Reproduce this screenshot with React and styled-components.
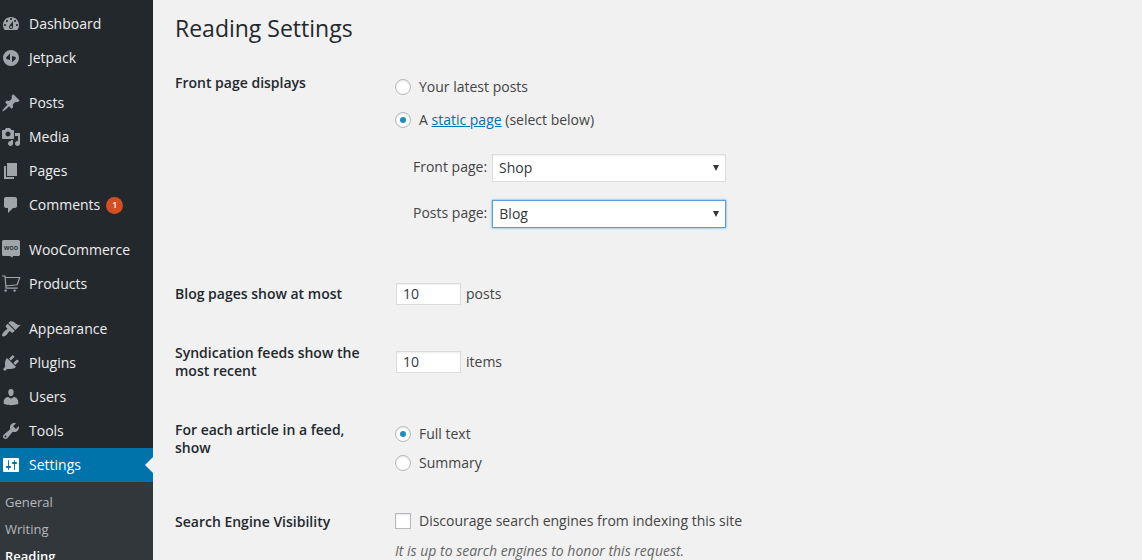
import React from 'react';
import styled, { createGlobalStyle, css, ThemeProvider } from 'styled-components';

const theme = {
  font: "'Open Sans', 'Noto Sans', sans-serif",
  colors: {
    menu: '#23282d',
    submenu: '#32373c',
    active: '#0073aa',
    menuText: '#eee',
    submenuText: '#b4b9be',
    icon: '#a0a5aa',
    badge: '#d54e21',
    page: '#f1f1f1',
    heading: '#23282d',
    text: '#444',
    muted: '#666',
    field: '#32373c',
    border: '#ddd',
    controlBorder: '#b4b9be',
    focus: '#5b9dd9',
    check: '#1e8cbe'
  }
};

const GlobalStyle = createGlobalStyle`
  *, *::before, *::after {
    box-sizing: border-box;
  }
  body {
    margin: 0;
    background: ${p => p.theme.colors.page};
    color: ${p => p.theme.colors.text};
    font-family: ${p => p.theme.font};
    font-size: 14px;
    line-height: 18px;
  }
`;

const icons = {
  dashboard: <path d="M3.76 16h12.48c1.1-1.37 1.76-3.11 1.76-5 0-4.42-3.58-8-8-8s-8 3.58-8 8c0 1.89.66 3.63 1.76 5zM10 4c.55 0 1 .45 1 1s-.45 1-1 1-1-.45-1-1 .45-1 1-1zM6 6c.55 0 1 .45 1 1s-.45 1-1 1-1-.45-1-1 .45-1 1-1zm8 0c.55 0 1 .45 1 1s-.45 1-1 1-1-.45-1-1 .45-1 1-1zm-5.37 5.55L12 7v6c0 1.1-.9 2-2 2s-2-.9-2-2c0-.57.24-1.08.63-1.45zM4 10c.55 0 1 .45 1 1s-.45 1-1 1-1-.45-1-1 .45-1 1-1zm12 0c.55 0 1 .45 1 1s-.45 1-1 1-1-.45-1-1 .45-1 1-1zm-5 3c0-.55-.45-1-1-1s-1 .45-1 1 .45 1 1 1 1-.45 1-1z" />,
  jetpack: <path fillRule="evenodd" d="M10 2a8 8 0 1 0 0 16 8 8 0 0 0 0-16zM9 5.500V12l-2.800-.700c-1-.300-1.400-1.200-.900-2zM11 14.500V8l2.800.700c1 .300 1.400 1.200.900 2z" />,
  posts: <path d="M10.44 3.02l1.82-1.82 6.36 6.35-1.83 1.82c-1.05-.68-2.48-.57-3.41.36l-.75.75c-.92.93-1.04 2.35-.35 3.41l-1.83 1.82-2.41-2.41-2.8 2.79c-.42.42-3.38 2.71-3.8 2.29s1.86-3.39 2.28-3.81l2.79-2.79L4.1 9.36l1.83-1.82c1.05.69 2.48.57 3.4-.36l.75-.75c.93-.92 1.05-2.35.36-3.41z" />,
  media: <path d="M13 11V4c0-.55-.45-1-1-1h-1.67L9 1H5L3.67 3H2c-.55 0-1 .45-1 1v7c0 .55.45 1 1 1h10c.55 0 1-.45 1-1zM7 4.5c1.38 0 2.5 1.12 2.5 2.5S8.38 9.5 7 9.5 4.5 8.38 4.5 7 5.62 4.5 7 4.5zM14 6h5v10.5c0 1.38-1.12 2.5-2.5 2.5S14 17.88 14 16.5s1.12-2.5 2.5-2.5c.17 0 .34.02.5.05V9h-3V6zm-4 8.05V13h2v3.5c0 1.38-1.12 2.5-2.5 2.5S7 17.88 7 16.5 8.12 14 9.5 14c.17 0 .34.02.5.05z" />,
  pages: <path d="M6 15V2h10v13H6zm-1 1h8v2H3V5h2v11z" />,
  comments: <path d="M5 2h9c1.1 0 2 .9 2 2v7c0 1.1-.9 2-2 2h-2l-5 5v-5H5c-1.1 0-2-.9-2-2V4c0-1.1.9-2 2-2z" />,
  woocommerce: (
    <>
      <path d="M2.500 0h15A1.500 1.500 0 0 1 19 1.500v13a1.500 1.500 0 0 1-1.500 1.500H12l-.500 1.800L9 16H2.500A1.500 1.500 0 0 1 1 14.500v-13A1.500 1.500 0 0 1 2.500 0z" />
      <text x="10" y="10" textAnchor="middle" fontSize="7" fontWeight="600" fill={theme.colors.menu}>woo</text>
    </>
  ),
  products: (
    <>
      <path fill="none" stroke="currentColor" strokeWidth="1.2" d="M1 2h3l1 12M4 3.500h14.600l-2.400 7.300L5 12M4.500 14.200h12.200" />
      <circle cx="4.600" cy="16.600" r="1.200" />
      <circle cx="13.600" cy="16.600" r="1.200" />
    </>
  ),
  appearance: <path d="M14.48 11.06L7.41 3.99l1.5-1.5c.5-.56 2.3-.47 3.51.32 1.21.8 1.43 1.28 2.91 2.1 1.18.64 2.45 1.26 4.45.85zm-.71.71L6.7 4.7 4.93 6.47c-.39.39-.39 1.02 0 1.41l1.06 1.06c.39.39.39 1.03 0 1.42-.6.6-1.43 1.11-2.21 1.69-.35.26-.7.53-1.01.84C1.43 14.23.4 16.08 1.4 17.07c.99 1 2.84-.03 4.18-1.36.31-.31.58-.66.85-1.02.57-.78 1.08-1.61 1.69-2.21.39-.39 1.02-.39 1.41 0l1.06 1.06c.39.39 1.02.39 1.41 0z" />,
  plugins: <path d="M13.11 4.36L9.87 7.6 8 5.73l3.24-3.24c.35-.34 1.05-.2 1.56.32.52.51.66 1.21.31 1.55zm-8 1.77l.91-1.12 9.01 9.01-1.19.84c-.71.71-2.63 1.16-3.82 1.16H6.14L4.9 17.26c-.59.59-1.54.59-2.12 0-.59-.58-.59-1.53 0-2.12l1.24-1.24v-3.88c0-1.13.4-3.19 1.09-3.89zm7.26 3.97l3.24-3.24c.34-.35 1.04-.21 1.55.31.52.51.66 1.21.31 1.55l-3.24 3.25z" />,
  users: <path d="M10 9.25c-2.27 0-2.73-3.44-2.73-3.44C7 4.02 7.82 2 9.97 2c2.16 0 2.98 2.02 2.71 3.81 0 0-.41 3.44-2.68 3.44zm0 2.57L12.72 10c2.39 0 4.52 2.33 4.52 4.53v2.49s-3.65 1.13-7.24 1.13c-3.65 0-7.24-1.13-7.24-1.13v-2.49c0-2.25 1.94-4.48 4.47-4.48z" />,
  tools: <path d="M16.68 9.77c-1.34 1.34-3.3 1.67-4.95.99l-5.41 6.52c-.99.99-2.59.99-3.58 0s-.99-2.59 0-3.57l6.52-5.42c-.68-1.65-.35-3.61.99-4.95 1.28-1.28 3.12-1.62 4.72-1.06l-2.89 2.89 2.82 2.82 2.86-2.87c.53 1.58.18 3.39-1.08 4.65zM3.81 16.21c.4.39 1.04.39 1.43 0 .4-.4.4-1.04 0-1.43-.39-.4-1.03-.4-1.43 0-.39.39-.39 1.03 0 1.43z" />,
  settings: <path d="M18 16V4c0-.55-.45-1-1-1H3c-.55 0-1 .45-1 1v12c0 .55.45 1 1 1h14c.55 0 1-.45 1-1zM8 11h1c.55 0 1 .45 1 1s-.45 1-1 1H8v1.5c0 .28-.22.5-.5.5s-.5-.22-.5-.5V13H6c-.55 0-1-.45-1-1s.45-1 1-1h1V5.500c0-.28.22-.5.5-.5s.5.22.5.5V11zm5-2h-1c-.55 0-1-.45-1-1s.45-1 1-1h1V5.500c0-.28.22-.5.5-.5s.5.22.5.5V7h1c.55 0 1 .45 1 1s-.45 1-1 1h-1v5.500c0 .28-.22.5-.5.5s-.5-.22-.5-.5V9z" />
};

const menu = [
  [
    { icon: 'dashboard', label: 'Dashboard' },
    { icon: 'jetpack', label: 'Jetpack' }
  ],
  [
    { icon: 'posts', label: 'Posts' },
    { icon: 'media', label: 'Media' },
    { icon: 'pages', label: 'Pages' },
    { icon: 'comments', label: 'Comments', count: 1 }
  ],
  [
    { icon: 'woocommerce', label: 'WooCommerce' },
    { icon: 'products', label: 'Products' }
  ],
  [
    { icon: 'appearance', label: 'Appearance' },
    { icon: 'plugins', label: 'Plugins' },
    { icon: 'users', label: 'Users' },
    { icon: 'tools', label: 'Tools' },
    { icon: 'settings', label: 'Settings', active: true, children: ['General', 'Writing', 'Reading'] }
  ]
];

const Layout = styled.div`
  display: flex;
  height: 100vh;
  overflow: hidden;
`;

const Sidebar = styled.nav`
  flex: none;
  width: 153px;
  padding-top: 7px;
  overflow: hidden;
  background: ${p => p.theme.colors.menu};
`;

const MenuGroup = styled.ul`
  list-style: none;
  margin: 0;
  padding: 0;
  & + & {
    margin-top: 11px;
  }
`;

const MenuLink = styled.a`
  position: relative;
  display: flex;
  align-items: center;
  height: 34px;
  padding-left: 1px;
  color: ${p => p.theme.colors.menuText};
  text-decoration: none;
  ${p => p.$active && css`
    background: ${p.theme.colors.active};
    color: #fff;
    &::after {
      content: '';
      position: absolute;
      right: 0;
      top: 9px;
      border: 8px solid transparent;
      border-left-width: 0;
      border-right-color: ${p.theme.colors.page};
    }
  `}
`;

const MenuIcon = styled.svg`
  flex: none;
  width: 20px;
  height: 20px;
  margin-right: 8px;
  fill: currentColor;
  color: ${p => (p.$active ? '#fff' : p.theme.colors.icon)};
`;

const Badge = styled.span`
  display: flex;
  align-items: center;
  justify-content: center;
  min-width: 17px;
  height: 17px;
  margin-left: 6px;
  border-radius: 9px;
  background: ${p => p.theme.colors.badge};
  color: #fff;
  font-size: 9px;
  font-weight: 600;
`;

const Submenu = styled.ul`
  list-style: none;
  margin: 0;
  padding: 7px 0;
  background: ${p => p.theme.colors.submenu};
`;

const SubmenuLink = styled.a`
  display: block;
  padding-left: 5px;
  font-size: 13px;
  line-height: 27px;
  color: ${p => (p.$current ? '#fff' : p.theme.colors.submenuText)};
  font-weight: ${p => (p.$current ? 600 : 400)};
  text-decoration: none;
`;

const Main = styled.main`
  flex: 1;
  min-width: 0;
  overflow: hidden;
  padding: 9px 20px 0 22px;
`;

const Title = styled.h1`
  margin: 0 0 7px;
  font-size: 23px;
  font-weight: 400;
  line-height: 38px;
  color: ${p => p.theme.colors.heading};
`;

const Row = styled.div`
  display: grid;
  grid-template-columns: 210px 1fr;
`;

const rowHeading = css`
  padding: 20px 10px 21px 0;
  color: ${p => p.theme.colors.heading};
  font-weight: 600;
`;

const RowHeading = styled.div`
  ${rowHeading}
`;

const RowLabel = styled.label`
  ${rowHeading}
`;

const RowBody = styled.div`
  align-self: center;
  padding: 15px 10px 17px;
`;

const Options = styled.div`
  display: flex;
  flex-direction: column;
  align-items: flex-start;
  gap: ${p => p.$gap}px;
  padding-top: 5px;
`;

const Option = styled.div`
  display: flex;
  align-items: center;
  gap: 8px;
  height: 26px;
`;

const control = css`
  appearance: none;
  flex: none;
  width: 16px;
  height: 16px;
  margin: 0;
  border: 1px solid ${p => p.theme.colors.controlBorder};
  background: #fff;
  box-shadow: inset 0 1px 2px rgba(0, 0, 0, 0.1);
`;

const Radio = styled.input.attrs({ type: 'radio' })`
  ${control}
  display: grid;
  place-items: center;
  border-radius: 50%;
  &:checked::before {
    content: '';
    width: 6px;
    height: 6px;
    border-radius: 50%;
    background: ${p => p.theme.colors.check};
  }
`;

const Checkbox = styled.input.attrs({ type: 'checkbox' })`
  ${control}
  &:checked {
    background: ${p => p.theme.colors.check};
  }
`;

const Link = styled.a`
  color: ${p => p.theme.colors.active};
`;

const PageList = styled.div`
  display: flex;
  flex-direction: column;
  gap: 18px;
  margin: 21px 0 20px 18px;
`;

const PageField = styled.div`
  display: flex;
  align-items: center;
  gap: 5px;
`;

const PageLabel = styled.label`
  padding-bottom: 2px;
`;

const SelectBox = styled.div`
  display: grid;
  align-items: center;
  width: 234px;
  > * {
    grid-area: 1 / 1;
  }
`;

const Select = styled.select`
  appearance: none;
  width: 100%;
  height: 28px;
  padding: 0 20px 0 6px;
  border: 1px solid ${p => (p.$focused ? p.theme.colors.focus : p.theme.colors.border)};
  border-radius: 0;
  outline: none;
  background: #fff;
  box-shadow: ${p => (p.$focused ? '0 0 2px rgba(30, 140, 190, 0.8)' : 'inset 0 1px 2px rgba(0, 0, 0, 0.07)')};
  color: ${p => p.theme.colors.field};
  font: inherit;
`;

const Arrow = styled.svg`
  justify-self: end;
  width: 6px;
  height: 6px;
  margin-right: 7px;
  fill: ${p => p.theme.colors.field};
  pointer-events: none;
`;

const NumberField = styled.div`
  display: flex;
  align-items: center;
  gap: 5px;
  padding-left: 1px;
`;

const NumberInput = styled.input.attrs({ type: 'number' })`
  appearance: textfield;
  width: 65px;
  height: 22px;
  padding: 0 6px;
  border: 1px solid ${p => p.theme.colors.border};
  outline: none;
  background: #fff;
  box-shadow: inset 0 1px 2px rgba(0, 0, 0, 0.07);
  color: ${p => p.theme.colors.field};
  font: inherit;
  &::-webkit-inner-spin-button {
    display: none;
  }
`;

const Description = styled.p`
  margin: 8px 0 0;
  color: ${p => p.theme.colors.muted};
  font-style: italic;
`;

const MenuItem = ({ icon, label, count, active, children }) => (
  <li>
    <MenuLink href="#" $active={active}>
      <MenuIcon viewBox="0 0 20 20" $active={active} aria-hidden="true">{icons[icon]}</MenuIcon>
      {label}
      {count && <Badge>{count}</Badge>}
    </MenuLink>
    {children && (
      <Submenu>
        {children.map(name => (
          <li key={name}>
            <SubmenuLink href="#" $current={name === 'Reading'}>{name}</SubmenuLink>
          </li>
        ))}
      </Submenu>
    )}
  </li>
);

const PageSelect = ({ id, label, value, focused }) => (
  <PageField>
    <PageLabel htmlFor={id}>{label}</PageLabel>
    <SelectBox>
      <Select id={id} defaultValue={value} $focused={focused}>
        <option>Shop</option>
        <option>Blog</option>
      </Select>
      <Arrow viewBox="0 0 6 6" aria-hidden="true"><path d="M0 0h6L3 6z" /></Arrow>
    </SelectBox>
  </PageField>
);

const NumberRow = ({ id, label, unit }) => (
  <Row>
    <RowLabel htmlFor={id}>{label}</RowLabel>
    <RowBody>
      <NumberField>
        <NumberInput id={id} defaultValue={10} min={1} />
        {unit}
      </NumberField>
    </RowBody>
  </Row>
);

const App = () => (
  <ThemeProvider theme={theme}>
    <GlobalStyle />
    <Layout>
      <Sidebar>
        {menu.map(group => (
          <MenuGroup key={group[0].label}>
            {group.map(item => <MenuItem key={item.label} {...item} />)}
          </MenuGroup>
        ))}
      </Sidebar>
      <Main>
        <Title>Reading Settings</Title>
        <form>
          <Row role="radiogroup" aria-labelledby="front-heading">
            <RowHeading id="front-heading">Front page displays</RowHeading>
            <RowBody>
              <Options $gap={7}>
                <Option>
                  <Radio id="front-posts" name="front" />
                  <label htmlFor="front-posts">Your latest posts</label>
                </Option>
                <Option>
                  <Radio id="front-page" name="front" defaultChecked />
                  <label htmlFor="front-page">A <Link href="#">static page</Link> (select below)</label>
                </Option>
              </Options>
              <PageList>
                <PageSelect id="page-on-front" label="Front page:" value="Shop" />
                <PageSelect id="page-for-posts" label="Posts page:" value="Blog" focused />
              </PageList>
            </RowBody>
          </Row>
          <NumberRow id="posts-per-page" label="Blog pages show at most" unit="posts" />
          <NumberRow id="posts-per-rss" label="Syndication feeds show the most recent" unit="items" />
          <Row role="radiogroup" aria-labelledby="feed-heading">
            <RowHeading id="feed-heading">For each article in a feed, show</RowHeading>
            <RowBody>
              <Options $gap={3}>
                <Option>
                  <Radio id="feed-full" name="feed" defaultChecked />
                  <label htmlFor="feed-full">Full text</label>
                </Option>
                <Option>
                  <Radio id="feed-summary" name="feed" />
                  <label htmlFor="feed-summary">Summary</label>
                </Option>
              </Options>
            </RowBody>
          </Row>
          <Row>
            <RowHeading>Search Engine Visibility</RowHeading>
            <RowBody>
              <Option>
                <Checkbox id="blog-public" />
                <label htmlFor="blog-public">Discourage search engines from indexing this site</label>
              </Option>
              <Description>It is up to search engines to honor this request.</Description>
            </RowBody>
          </Row>
        </form>
      </Main>
    </Layout>
  </ThemeProvider>
);

export default App;
